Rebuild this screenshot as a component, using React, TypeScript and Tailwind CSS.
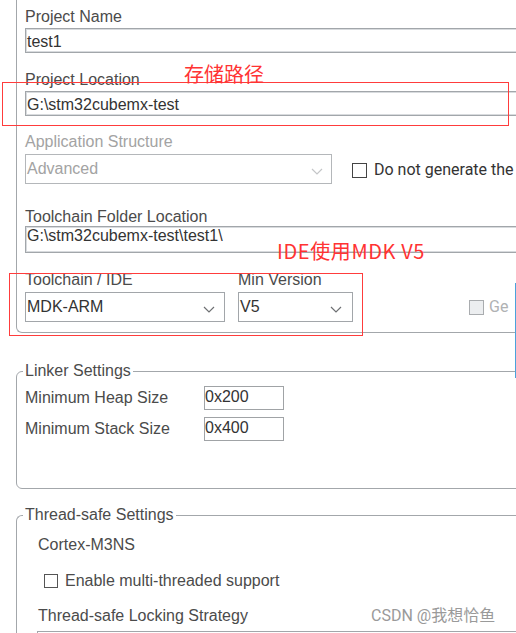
function Chevron({ disabled }: { disabled?: boolean }) {
  return (
    <svg width="12" height="7" viewBox="0 0 12 7" className="shrink-0 self-center">
      <polyline
        points="1,1 6,6 11,1"
        fill="none"
        stroke={disabled ? "#c4c6c8" : "#6e7073"}
        strokeWidth="1.2"
      />
    </svg>
  );
}

export default function App() {
  return (
    <div className="relative w-[516px] h-[633px] overflow-hidden bg-white font-['Liberation_Sans',Arial,sans-serif] text-[16px] leading-[18px] text-[#4b4b4b]">
      {/* project group */}
      <div className="ml-[16px] w-[560px] flex flex-col border-l border-b border-[#a3a7ab] rounded-bl-[6px] pl-[8px] pt-[8px] pb-[10px]">
        <div className="h-[18px]">Project Name</div>
        <div className="mt-[2px] h-[25px] w-[540px] border border-[#a2a6aa] shadow-[inset_0_0_0_1px_#d8dbde] pl-[1px] pt-[4px] text-[#333]">
          test1
        </div>

        <div className="mt-[18px] h-[18px]">Project Location</div>
        <div className="mt-[2px] h-[25px] w-[540px] border border-[#a2a6aa] shadow-[inset_0_0_0_1px_#d8dbde] pl-[1px] pt-[4px] text-[#333]">
          G:\stm32cubemx-test
        </div>

        <div className="mt-[17px] h-[18px] text-[#a3a3a3]">Application Structure</div>
        <div className="mt-[3px] flex items-start">
          <div className="shrink-0 h-[30px] w-[307px] flex justify-between border border-[#b4b7ba] pl-[1px] pt-[5px] pr-[8px] text-[#a3a3a3]">
            <span>Advanced</span>
            <Chevron disabled />
          </div>
          <div className="shrink-0 ml-[20px] mt-[7px] flex items-center gap-[7px] font-['Roboto',sans-serif] text-[16px] text-[#333] whitespace-nowrap">
            <span className="w-[15px] h-[15px] border border-[#444] bg-white" />
            <span>Do not generate the</span>
          </div>
        </div>

        <div className="mt-[24px] h-[18px]">Toolchain Folder Location</div>
        <div className="h-[27px] w-[540px] border border-[#a2a6aa] shadow-[inset_0_0_0_1px_#d8dbde] pl-[1px] text-[#333]">
          G:\stm32cubemx-test\test1\
        </div>

        <div className="mt-[18px] h-[18px] flex">
          <span className="w-[213px]">Toolchain / IDE</span>
          <span>Min Version</span>
        </div>
        <div className="mt-[3px] flex items-center">
          <div className="shrink-0 h-[30px] w-[200px] flex justify-between border border-[#a2a6aa] pl-[1px] pt-[5px] pr-[9px] text-[#333]">
            <span>MDK-ARM</span>
            <Chevron />
          </div>
          <div className="shrink-0 ml-[13px] h-[30px] w-[115px] flex justify-between border border-[#a2a6aa] pl-[1px] pt-[5px] pr-[10px] text-[#333]">
            <span>V5</span>
            <Chevron />
          </div>
          <div className="shrink-0 ml-[116px] flex items-center gap-[5px] font-['Roboto',sans-serif] text-[#b0b2b4] whitespace-nowrap">
            <span className="w-[15px] h-[15px] border border-[#a9acaf] bg-[#eceef0]" />
            <span>Ge</span>
          </div>
        </div>
      </div>

      {/* linker settings */}
      <fieldset className="ml-[16px] mt-[29px] w-[560px] rounded-[6px] border border-[#a3a7ab] pl-[8px] pb-[47px]">
        <legend className="-ml-[2px] px-[2px] leading-[18px]">Linker Settings</legend>
        <div className="mt-[6px] flex items-center h-[24px]">
          <span className="w-[179px]">Minimum Heap Size</span>
          <div className="h-[24px] w-[80px] border border-[#a0a3a6] pt-[1px] text-[#333]">0x200</div>
        </div>
        <div className="mt-[7px] flex items-center h-[24px]">
          <span className="w-[179px]">Minimum Stack Size</span>
          <div className="h-[24px] w-[80px] border border-[#a0a3a6] pt-[1px] text-[#333]">0x400</div>
        </div>
      </fieldset>

      {/* thread-safe settings */}
      <fieldset className="ml-[16px] mt-[17px] w-[560px] h-[200px] rounded-tl-[6px] border-l border-t border-[#a3a7ab] pl-[8px]">
        <legend className="-ml-[2px] px-[2px] leading-[18px]">Thread-safe Settings</legend>
        <div className="pl-[13px] flex flex-col">
          <div className="mt-[12px] h-[18px]">Cortex-M3NS</div>
          <div className="mt-[18px] h-[18px] flex items-center">
            <span className="ml-[6px] w-[14px] h-[14px] border border-[#555] bg-white" />
            <span className="ml-[7px]">Enable multi-threaded support</span>
          </div>
          <div className="mt-[17px] h-[18px]">Thread-safe Locking Strategy</div>
          <div className="mt-[6px] -ml-[1px] h-[25px] w-[500px] border border-[#a2a6aa]" />
        </div>
      </fieldset>

      {/* annotations */}
      <div className="absolute left-[2px] top-[82px] w-[507px] h-[44px] border border-[#ff3c3c]" />
      <div className="absolute left-[9px] top-[273px] w-[354px] h-[63px] border border-[#ff3c3c]" />
      <div className="absolute left-[184px] top-[64px] font-['Noto_Sans_CJK_SC',sans-serif] text-[20px] leading-[20px] text-[#ff3333]">
        存储路径
      </div>
      <div className="absolute left-[277px] top-[241px] font-['Noto_Sans_CJK_SC',sans-serif] text-[20px] leading-[20px] tracking-[0.6px] text-[#ff3333] whitespace-nowrap">
        IDE使用MDK V5
      </div>
      <div className="absolute left-[515px] top-[283px] w-[1px] h-[95px] bg-[#4aa3dc]" />
      <div className="absolute left-[371px] top-[606px] font-['Roboto','Noto_Sans_CJK_SC',sans-serif] text-[16px] leading-[20px] text-[#9a9a9a] whitespace-nowrap">
        CSDN @我想恰鱼
      </div>
    </div>
  );
}
